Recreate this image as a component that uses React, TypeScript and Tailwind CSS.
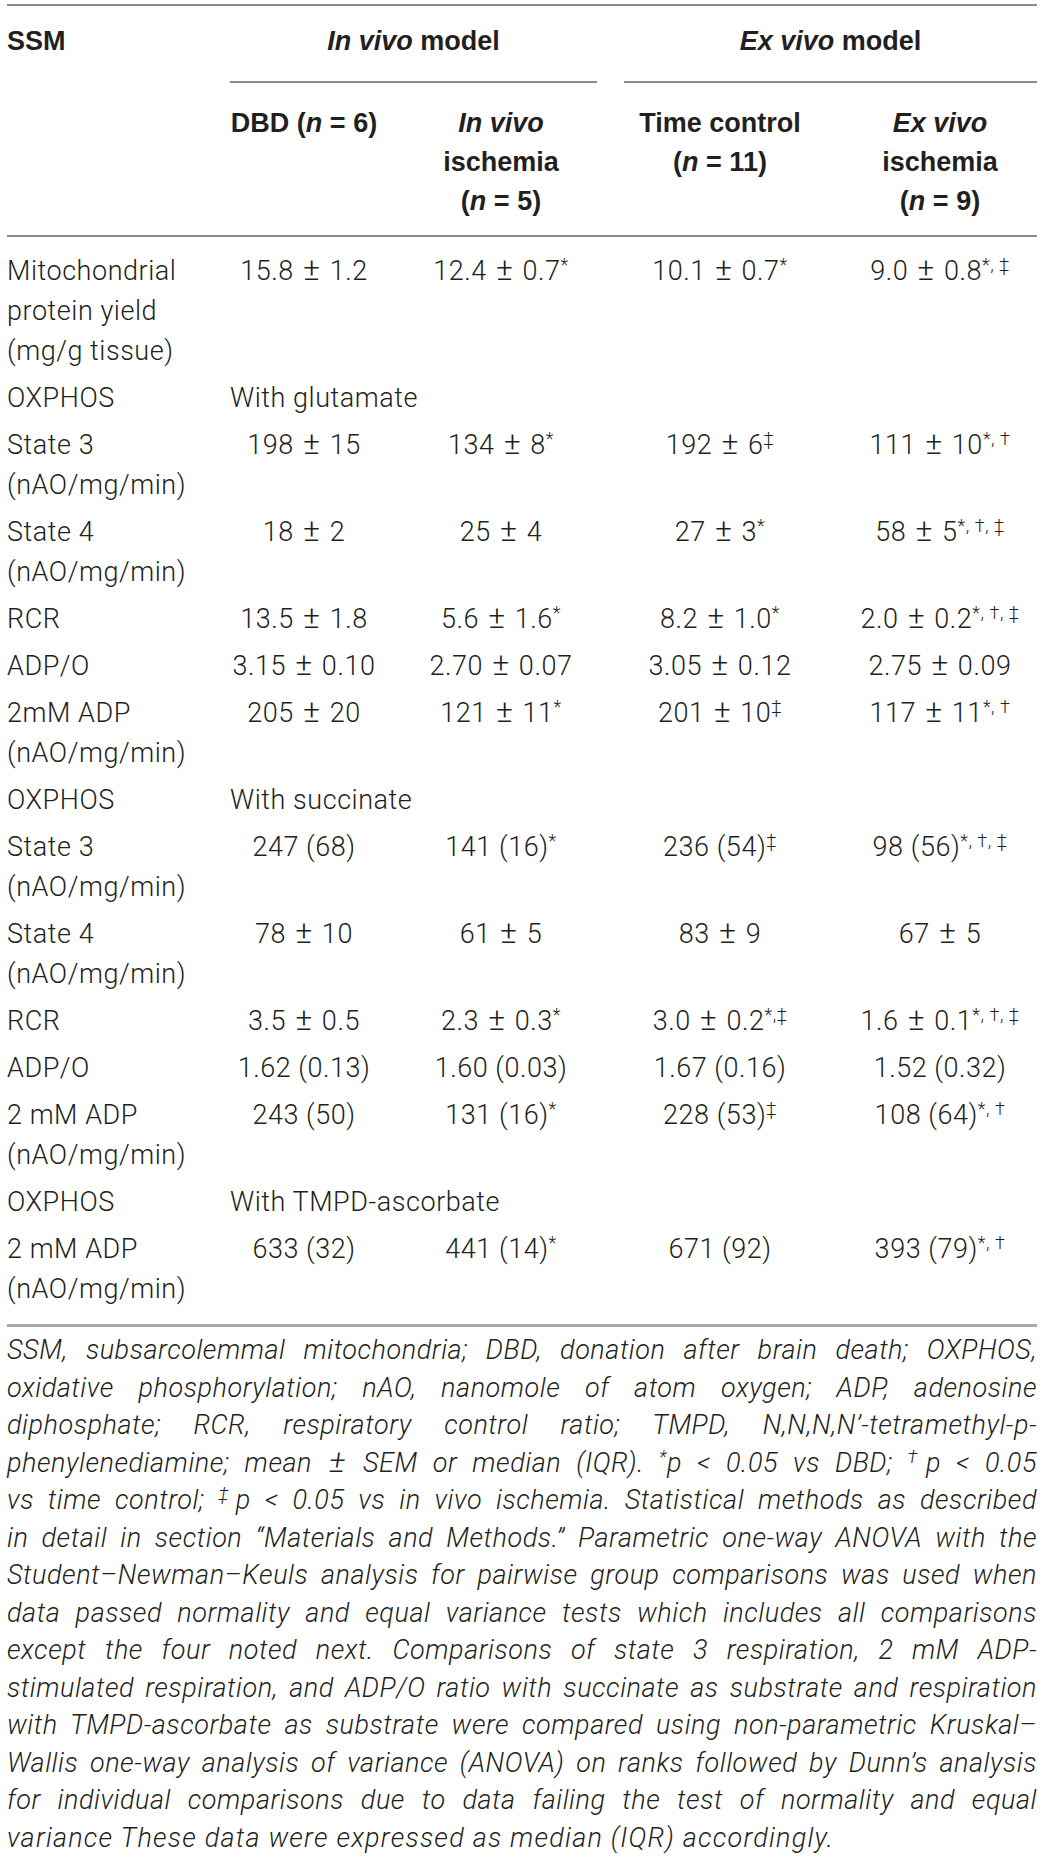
import React from "react";

const S = ({ children }: { children: React.ReactNode }) => (
  <sup className="text-[18px] top-[-9px]">{children}</sup>
);

const PM = () => <span className="mx-[2px] text-[32px] leading-none">±</span>;

const V = ({ t, s }: { t: string; s?: string }) => {
  const parts = t.split("±");
  return (
    <>
      {parts.length === 2 ? (
        <>
          {parts[0]}
          <PM />
          {parts[1]}
        </>
      ) : (
        t
      )}
      {s ? <S>{s}</S> : null}
    </>
  );
};

const COLS = "grid grid-cols-[196px_148px_192px_192px_194px] gap-x-[27px]";

type Row = { label: React.ReactNode; vals?: [string, string?][]; span?: string };

const two = (a: string) => (
  <>
    {a}
    <br />
    (nAO/mg/min)
  </>
);

const rows: Row[] = [
  {
    label: (
      <>
        Mitochondrial
        <br />
        protein yield
        <br />
        (mg/g tissue)
      </>
    ),
    vals: [["15.8 ± 1.2"], ["12.4 ± 0.7", "*"], ["10.1 ± 0.7", "*"], ["9.0 ± 0.8", "*, ‡"]],
  },
  { label: "OXPHOS", span: "With glutamate" },
  {
    label: two("State 3"),
    vals: [["198 ± 15"], ["134 ± 8", "*"], ["192 ± 6", "‡"], ["111 ± 10", "*, †"]],
  },
  {
    label: two("State 4"),
    vals: [["18 ± 2"], ["25 ± 4"], ["27 ± 3", "*"], ["58 ± 5", "*, †, ‡"]],
  },
  {
    label: "RCR",
    vals: [["13.5 ± 1.8"], ["5.6 ± 1.6", "*"], ["8.2 ± 1.0", "*"], ["2.0 ± 0.2", "*, †, ‡"]],
  },
  { label: "ADP/O", vals: [["3.15 ± 0.10"], ["2.70 ± 0.07"], ["3.05 ± 0.12"], ["2.75 ± 0.09"]] },
  {
    label: two("2mM ADP"),
    vals: [["205 ± 20"], ["121 ± 11", "*"], ["201 ± 10", "‡"], ["117 ± 11", "*, †"]],
  },
  { label: "OXPHOS", span: "With succinate" },
  {
    label: two("State 3"),
    vals: [["247 (68)"], ["141 (16)", "*"], ["236 (54)", "‡"], ["98 (56)", "*, †, ‡"]],
  },
  {
    label: two("State 4"),
    vals: [["78 ± 10"], ["61 ± 5"], ["83 ± 9"], ["67 ± 5"]],
  },
  {
    label: "RCR",
    vals: [["3.5 ± 0.5"], ["2.3 ± 0.3", "*"], ["3.0 ± 0.2", "*,‡"], ["1.6 ± 0.1", "*, †, ‡"]],
  },
  { label: "ADP/O", vals: [["1.62 (0.13)"], ["1.60 (0.03)"], ["1.67 (0.16)"], ["1.52 (0.32)"]] },
  {
    label: two("2 mM ADP"),
    vals: [["243 (50)"], ["131 (16)", "*"], ["228 (53)", "‡"], ["108 (64)", "*, †"]],
  },
  { label: "OXPHOS", span: "With TMPD-ascorbate" },
  {
    label: two("2 mM ADP"),
    vals: [["633 (32)"], ["441 (14)", "*"], ["671 (92)"], ["393 (79)", "*, †"]],
  },
];

const caption: React.ReactNode[] = [
  "SSM, subsarcolemmal mitochondria; DBD, donation after brain death; OXPHOS,",
  "oxidative phosphorylation; nAO, nanomole of atom oxygen; ADP, adenosine",
  "diphosphate; RCR, respiratory control ratio; TMPD, N,N,N,N\u2019-tetramethyl-p-",
  <>
    phenylenediamine; mean <PM /> SEM or median (IQR). <S>*</S>p &lt; 0.05 vs DBD; <S>†</S>p &lt; 0.05
  </>,
  <>
    vs time control; <S>‡</S>p &lt; 0.05 vs in vivo ischemia. Statistical methods as described
  </>,
  "in detail in section \u201CMaterials and Methods.\u201D Parametric one-way ANOVA with the",
  "Student\u2013Newman\u2013Keuls analysis for pairwise group comparisons was used when",
  "data passed normality and equal variance tests which includes all comparisons",
  "except the four noted next. Comparisons of state 3 respiration, 2 mM ADP-",
  "stimulated respiration, and ADP/O ratio with succinate as substrate and respiration",
  "with TMPD-ascorbate as substrate were compared using non-parametric Kruskal\u2013",
  "Wallis one-way analysis of variance (ANOVA) on ranks followed by Dunn\u2019s analysis",
  "for individual comparisons due to data failing the test of normality and equal",
];

export default function App() {
  return (
    <div className="min-h-[1860px] bg-white pt-[4px] font-['Roboto','Liberation_Sans',Arial,sans-serif] font-light text-[27px] text-[#231f20]">
      <div className="ml-[7px] w-[1030px]">
        <div className="border-t-2 border-[#8c8c8c]">
          {/* group header row */}
          <div className={`${COLS} font-['Liberation_Sans',Arial,sans-serif] font-bold leading-[40px]`}>
            <div className="pt-[15px]">SSM</div>
            <div className="col-span-2 pt-[15px] pb-[20px] text-center border-b-2 border-[#8c8c8c]">
              <i>In vivo</i> model
            </div>
            <div className="col-span-2 pt-[15px] pb-[20px] text-center border-b-2 border-[#8c8c8c]">
              <i>Ex vivo</i> model
            </div>
          </div>
          {/* sub header row */}
          <div
            className={`${COLS} font-['Liberation_Sans',Arial,sans-serif] font-bold leading-[39px] pt-[21px] pb-[14px] border-b-2 border-[#8c8c8c]`}
          >
            <div />
            <div className="text-center whitespace-nowrap">
              DBD (<i>n</i> = 6)
            </div>
            <div className="text-center whitespace-nowrap">
              <i>In vivo</i>
              <br />
              ischemia
              <br />(<i>n</i> = 5)
            </div>
            <div className="text-center whitespace-nowrap">
              Time control
              <br />(<i>n</i> = 11)
            </div>
            <div className="text-center whitespace-nowrap">
              <i>Ex vivo</i>
              <br />
              ischemia
              <br />(<i>n</i> = 9)
            </div>
          </div>
          {/* body */}
          <div className="pt-[10px] pb-[12px] border-b-[3px] border-[#a9a9a9] tracking-[0.02em]">
            {rows.map((r, i) => (
              <div key={i} className={`${COLS} py-[3.5px] leading-[40px]`}>
                <div className="whitespace-nowrap">{r.label}</div>
                {r.span ? (
                  <div className="col-span-4 whitespace-nowrap">{r.span}</div>
                ) : (
                  r.vals!.map((v, j) => (
                    <div key={j} className="text-center whitespace-nowrap">
                      <V t={v[0]} s={v[1]} />
                    </div>
                  ))
                )}
              </div>
            ))}
          </div>
        </div>
        {/* caption */}
        <div className="mt-[5px] italic leading-[37.5px] tracking-[0.02em]">
          {caption.map((c, i) => (
            <div key={i} className="text-justify [text-align-last:justify] whitespace-nowrap">
              {c}
            </div>
          ))}
          <div className="whitespace-nowrap tracking-[0.045em]">
            variance These data were expressed as median (IQR) accordingly.
          </div>
        </div>
      </div>
    </div>
  );
}
